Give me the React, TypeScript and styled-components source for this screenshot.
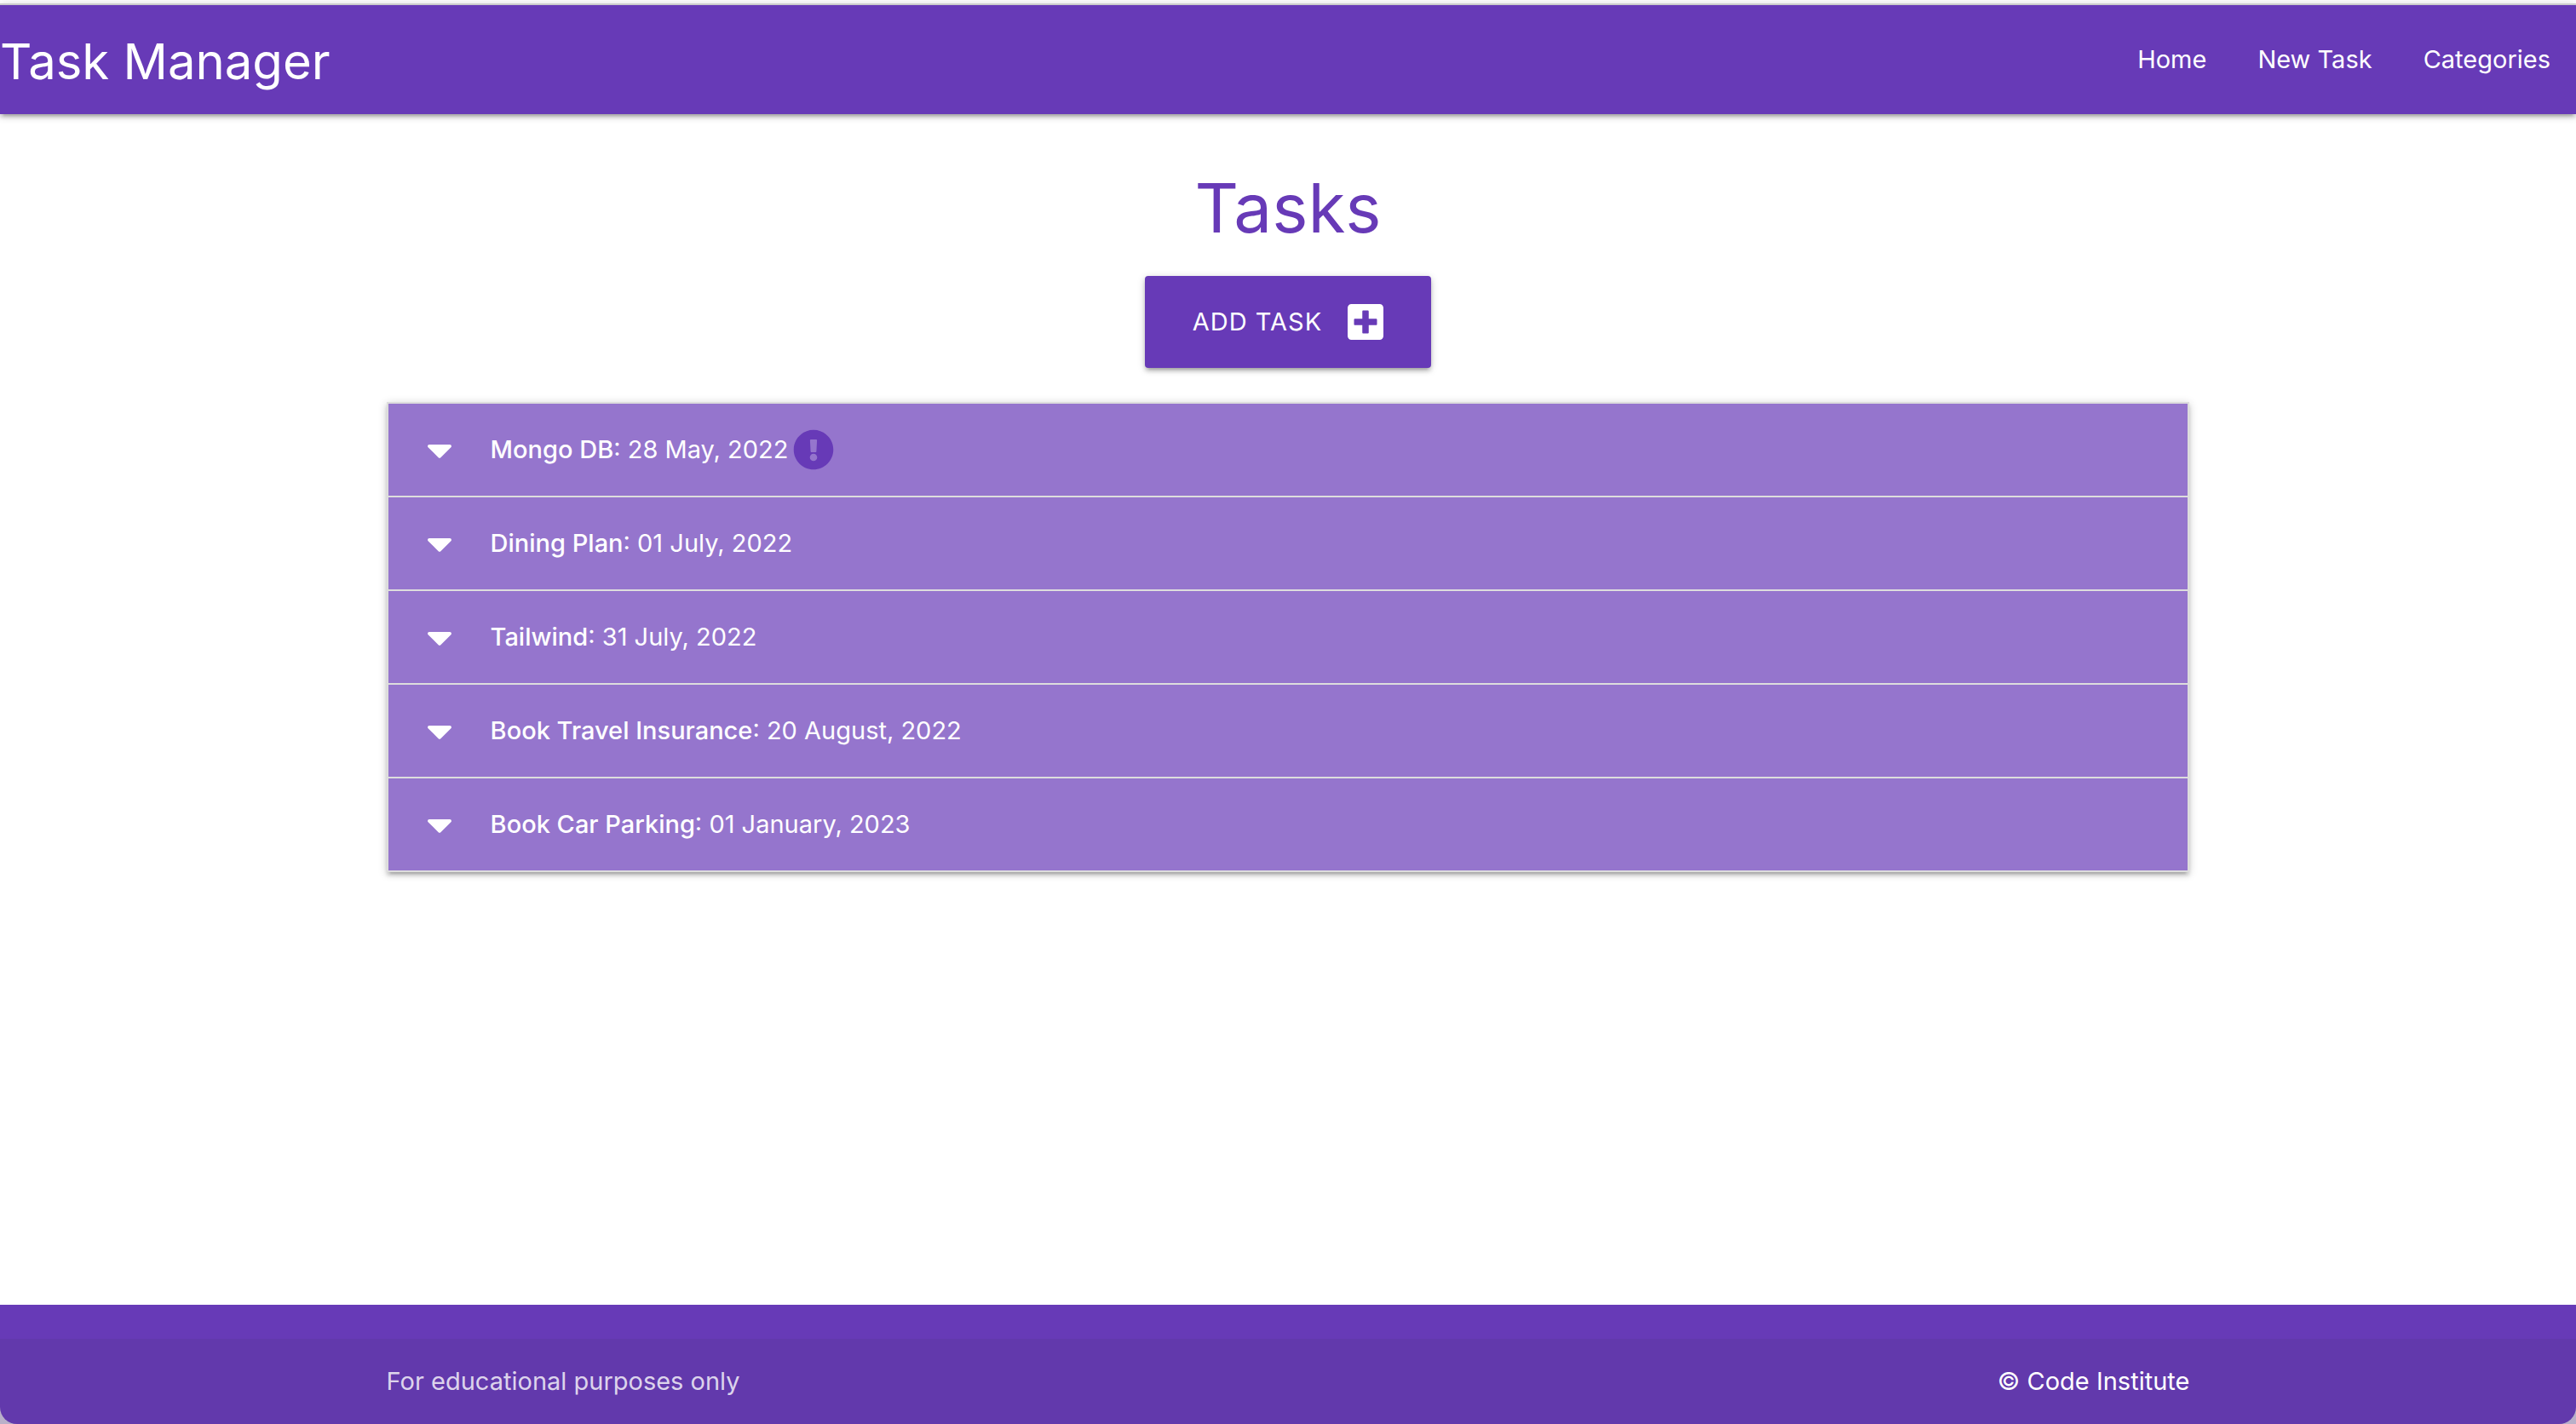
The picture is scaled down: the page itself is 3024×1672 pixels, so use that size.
import React from "react";
import styled, { createGlobalStyle } from "styled-components";
import { FaCaretDown, FaExclamationCircle, FaPlusSquare } from "react-icons/fa";

const purple = "#673ab7";
const lightPurple = "#9575cd";
const divider = "#ddd";
const raised =
  "0 4px 4px 0 rgba(0,0,0,.14), 0 6px 2px -4px rgba(0,0,0,.12), 0 2px 10px 0 rgba(0,0,0,.2)";

const GlobalStyle = createGlobalStyle`
  *, *::before, *::after { box-sizing: border-box; }
  body {
    margin: 0;
    background: #fff;
    font-family: Inter, "Liberation Sans", sans-serif;
    font-size: 29px;
    line-height: 46px;
  }
  a { color: inherit; text-decoration: none; }
`;

const Page = styled.div`
  display: flex;
  flex-direction: column;
  min-height: 100vh;
  padding-top: 4px;
`;

const NavBar = styled.nav`
  display: flex;
  justify-content: space-between;
  align-items: center;
  border-top: 2px solid #ccc;
  background: ${purple};
  color: #fff;
  box-shadow: ${raised};
`;

const Brand = styled.a`
  padding-top: 4px;
  font-size: 58px;
  line-height: 124px;
`;

const NavLinks = styled.ul`
  display: flex;
  margin: 0;
  padding: 0;
  list-style: none;
`;

const NavLink = styled.a`
  display: block;
  padding: 0 30px;
  line-height: 128px;
`;

const Main = styled.main`
  flex: 1;
  display: flex;
  flex-direction: column;
  align-items: center;
  width: 70%;
  margin: 0 auto;
  padding: 62px 0;
`;

const Title = styled.h3`
  margin: 0 0 32px;
  color: ${purple};
  font-size: 80px;
  font-weight: 400;
  line-height: 96px;
`;

const AddButton = styled.button`
  display: flex;
  align-items: center;
  gap: 30px;
  height: 108px;
  margin-bottom: 40px;
  padding: 0 56px;
  border: 0;
  border-radius: 4px;
  background: ${purple};
  color: #fff;
  font: inherit;
  letter-spacing: 1px;
  text-transform: uppercase;
  box-shadow: ${raised};
  cursor: pointer;

  svg {
    width: 42px;
    height: 48px;
  }
`;

const TaskList = styled.ul`
  width: 100%;
  margin: 0;
  padding: 0;
  list-style: none;
  border: 2px solid ${divider};
  border-bottom: 0;
  box-shadow: ${raised};
`;

const TaskHeader = styled.button`
  display: flex;
  align-items: center;
  width: 100%;
  height: 110px;
  padding: 0 30px;
  border: 0;
  border-bottom: 2px solid ${divider};
  background: ${lightPurple};
  color: #fff;
  font: inherit;
  text-align: left;
  cursor: pointer;
`;

const Caret = styled(FaCaretDown)`
  width: 60px;
  height: 48px;
  margin-right: 30px;
`;

const TaskName = styled.strong`
  font-weight: 500;
`;

const Urgent = styled(FaExclamationCircle)`
  width: 48px;
  height: 48px;
  margin-left: 6px;
  color: ${purple};
`;

const FooterBackdrop = styled.div`
  background: #b9b0c9;
`;

const Footer = styled.footer`
  padding-top: 40px;
  border-radius: 0 0 20px 20px;
  background: ${purple};
  overflow: hidden;
`;

const Copyright = styled.div`
  display: flex;
  align-items: center;
  justify-content: space-between;
  min-height: 100px;
  padding: 0 15%;
  background: rgba(51, 51, 51, 0.08);
  color: rgba(255, 255, 255, 0.8);

  a {
    color: #fff;
  }
`;

interface Task {
  name: string;
  due: string;
  urgent?: boolean;
}

const tasks: Task[] = [
  { name: "Mongo DB", due: "28 May, 2022", urgent: true },
  { name: "Dining Plan", due: "01 July, 2022" },
  { name: "Tailwind", due: "31 July, 2022" },
  { name: "Book Travel Insurance", due: "20 August, 2022" },
  { name: "Book Car Parking", due: "01 January, 2023" },
];

const links = ["Home", "New Task", "Categories"];

export default function App() {
  return (
    <>
      <GlobalStyle />
      <Page>
        <NavBar>
          <Brand href="#">Task Manager</Brand>
          <NavLinks>
            {links.map((label) => (
              <li key={label}>
                <NavLink href="#">{label}</NavLink>
              </li>
            ))}
          </NavLinks>
        </NavBar>
        <Main>
          <Title>Tasks</Title>
          <AddButton type="button">
            Add Task
            <FaPlusSquare aria-hidden />
          </AddButton>
          <TaskList>
            {tasks.map((task) => (
              <li key={task.name}>
                <TaskHeader type="button" aria-expanded={false}>
                  <Caret aria-hidden />
                  <span>
                    <TaskName>{task.name}</TaskName>: {task.due}
                  </span>
                  {task.urgent && <Urgent aria-label="Urgent" />}
                </TaskHeader>
              </li>
            ))}
          </TaskList>
        </Main>
        <FooterBackdrop>
          <Footer>
            <Copyright>
              <span>For educational purposes only</span>
              <a href="#">© Code Institute</a>
            </Copyright>
          </Footer>
        </FooterBackdrop>
      </Page>
    </>
  );
}
